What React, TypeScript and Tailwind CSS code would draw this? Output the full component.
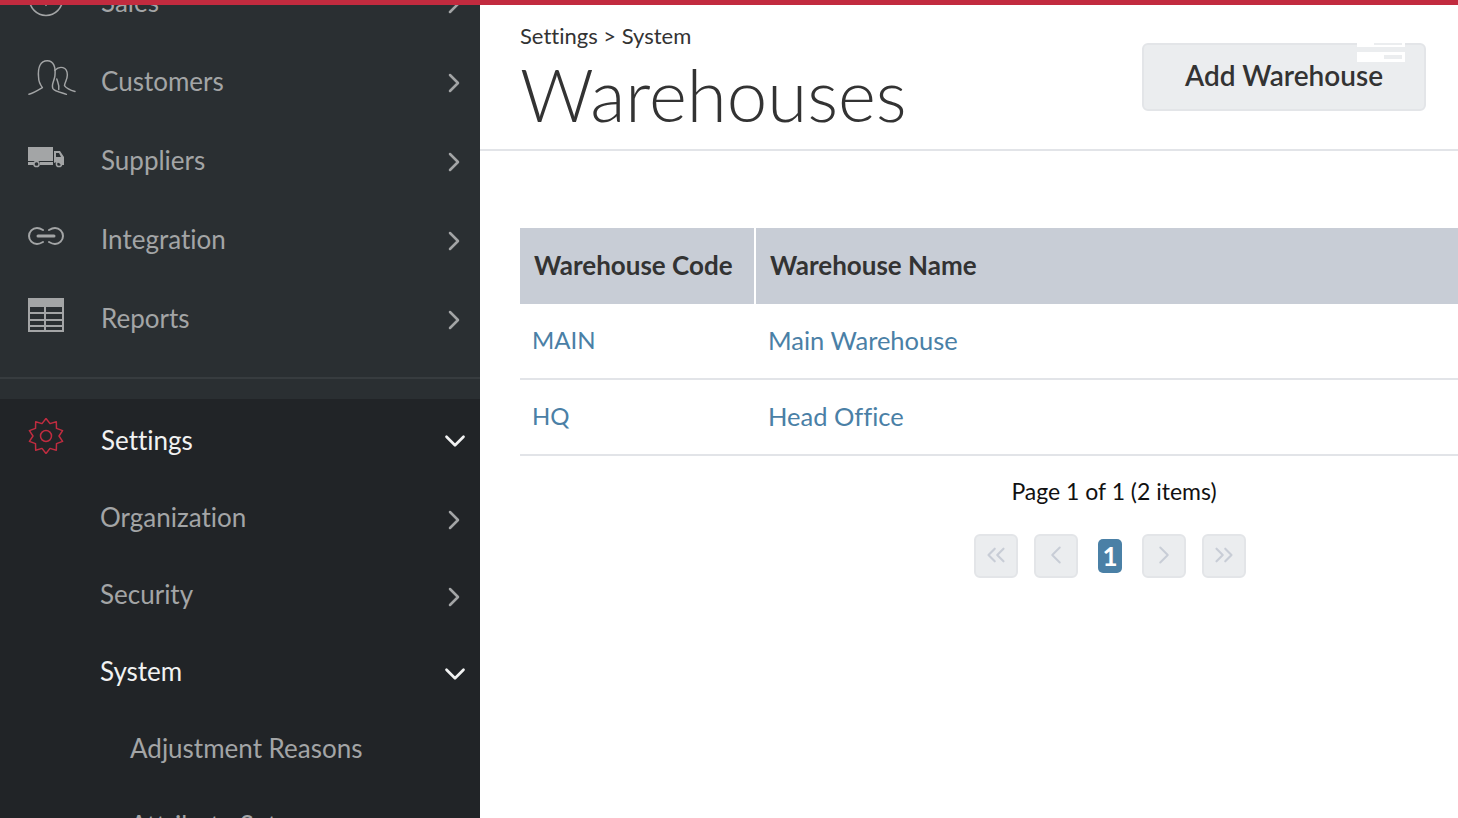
import React from "react";
import { ChevronRight, ChevronDown, ChevronLeft, ChevronsLeft, ChevronsRight } from "lucide-react";

const font = "font-['Lato','Liberation_Sans',sans-serif]";

const CustomersIcon = () => (
  <svg width="48" height="38" viewBox="0 0 50 38" fill="none" stroke="#a3a5a6" strokeWidth="1.5" strokeLinecap="round" strokeLinejoin="round">
    <path d="M1 36 C5 35 10 32 15 29 C12 25 11 23 11 18 C10 8 13 1 20 1 C27 1 29 8 28 17 C27 23 24 26 26 30 C28 33 34 34 40 36" />
    <path d="M28 11 C33 6 41 7 41 16 C41 21 38 24 38 27 C40 30 45 32 49 33" />
    <path d="M30 20 C31 24 33 27 32 31" />
  </svg>
);

const TruckIcon = () => (
  <svg width="36" height="21" viewBox="0 0 36 21">
    <path fill="#a3a5a6" d="M0 0 H25 V14 H0 Z M0 15 H6 V18 H0 Z M12 15 H25 V18 H12 Z" />
    <path fill="#a3a5a6" fillRule="evenodd" d="M26 4 H32 L36 10 V18 H33 A5 5 0 0 0 26 16 Z M28 6 V10 H33 L31 6 Z" />
    <circle cx="8.5" cy="17" r="2.6" fill="none" stroke="#a3a5a6" strokeWidth="1.5" />
    <circle cx="31" cy="17" r="2.6" fill="none" stroke="#a3a5a6" strokeWidth="1.5" />
  </svg>
);

const LinkIcon = () => (
  <svg width="36" height="18" viewBox="0 0 36 18" fill="none" stroke="#a3a5a6" strokeLinecap="round">
    <path strokeWidth="2" d="M15 3 C13 1.800 11 1 9 1 A8 8 0 0 0 9 17 C11 17 13 16.200 15 15" />
    <path strokeWidth="2" d="M21 3 C23 1.800 25 1 27 1 A8 8 0 0 1 27 17 C25 17 23 16.200 21 15" />
    <path strokeWidth="3" d="M10 9 H26" />
  </svg>
);

const ReportsIcon = () => (
  <svg width="36" height="34" viewBox="0 0 36 34">
    <path fill="#a3a5a6" fillRule="evenodd" d="M0 0 H36 V34 H0 Z M2 9 V14 H16 V9 Z M18 9 V14 H34 V9 Z M2 16 V21 H16 V16 Z M18 16 V21 H34 V16 Z M2 23 V27 H16 V23 Z M18 23 V27 H34 V23 Z M2 29 V32 H16 V29 Z M18 29 V32 H34 V29 Z" />
  </svg>
);

const GearIcon = () => {
  // alternating outer and inner points of a ten tooth wheel
  const pts: string[] = [];
  for (let i = 0; i < 20; i++) {
    const r = i % 2 === 0 ? 17.500 : 13;
    const a = (i * Math.PI) / 10 - Math.PI / 2;
    pts.push(`${(18 + r * Math.cos(a)).toFixed(1)},${(18 + r * Math.sin(a)).toFixed(1)}`);
  }
  return (
    <svg width="36" height="36" viewBox="0 0 36 36" fill="none" stroke="#c02c40" strokeWidth="1.5" strokeLinejoin="round">
      <polygon points={pts.join(" ")} />
      <circle cx="18" cy="18" r="5.500" />
    </svg>
  );
};

const SalesIcon = () => (
  <svg width="36" height="36" viewBox="0 0 36 36" fill="none" stroke="#a3a5a6" strokeWidth="1.6">
    <circle cx="18" cy="18" r="16.500" />
    <path d="M18 10 V24 M14 20 L18 24 L22 20" />
  </svg>
);

const MenuRow = ({ icon, label, open, active, sub, height = "h-[79px]", chevron = "mt-[3px]" }: any) => (
  <div className={`flex items-center ${height} shrink-0`}>
    <div className="w-[28px] shrink-0" />
    <div className={`${icon ? "w-[73px]" : "w-[72px]"} shrink-0 flex items-start`}>{icon}</div>
    {sub === 2 && <div className="w-[30px] shrink-0" />}
    <span className={`text-[26px] flex-1 ${active ? "text-[#f1f2f2]" : "text-[#a3a5a6]"}`}>{label}</span>
    {open ? (
      <ChevronDown size={34} className={`mr-[8px] text-[#f1f2f2] ${chevron}`} strokeWidth={1.9} />
    ) : sub === 2 ? null : (
      <ChevronRight size={32} className={`mr-[10px] text-[#a3a5a6] ${chevron}`} strokeWidth={1.9} />
    )}
  </div>
);

const PageBtn = ({ children }: { children: React.ReactNode }) => (
  <div className="w-[44px] h-[44px] pb-[2px] flex items-center justify-center rounded-[6px] bg-[#ebedef] border-2 border-[#e3e5e8] text-[#c8cdd6]">
    {children}
  </div>
);

const rows = [
  { code: "MAIN", name: "Main Warehouse" },
  { code: "HQ", name: "Head Office" },
];

export default function App() {
  return (
    <div className={`h-[818px] w-full overflow-hidden flex flex-col bg-white [font-variant-ligatures:none] ${font}`}>
      <div className="h-[5px] shrink-0 bg-[#c22b3f]" />
      <div className="flex flex-1 min-h-0">
        <aside className="w-[480px] shrink-0 bg-[#2a2f32] overflow-hidden flex flex-col">
          <div className="-mt-[42px]">
            <MenuRow icon={<div className="-mt-[7px]"><SalesIcon /></div>} label="Sales" />
            <MenuRow icon={<div className="-mt-[7px]"><CustomersIcon /></div>} label="Customers" />
            <MenuRow icon={<div className="-mt-[7px]"><TruckIcon /></div>} label="Suppliers" />
            <MenuRow icon={<div className="-mt-[8px]"><LinkIcon /></div>} label="Integration" />
            <MenuRow icon={<div className="-mt-[7px]"><ReportsIcon /></div>} label="Reports" />
          </div>
          <div className="h-[19px] shrink-0" />
          <div className="h-[2px] shrink-0 bg-[#373c3f]" />
          <div className="h-[20px] shrink-0" />
          <div className="bg-[#212427] flex-1">
            <MenuRow icon={<div className="-mt-[8px]"><GearIcon /></div>} label="Settings" active open height="h-[80px] pt-[2px]" chevron="mt-[2px]" />
            <MenuRow label="Organization" height="h-[77px]" chevron="mt-[5px]" />
            <MenuRow label="Security" height="h-[77px]" chevron="mt-[5px]" />
            <MenuRow label="System" active open height="h-[77px]" chevron="mt-[5px]" />
            <MenuRow label="Adjustment Reasons" sub={2} height="h-[77px]" />
            <MenuRow label="Attribute Sets" sub={2} height="h-[77px]" />
          </div>
        </aside>
        <main className="flex-1 min-w-0 overflow-hidden">
          <header className="h-[146px] border-b-2 border-[#e2e4e8] pl-[40px] pr-[32px] flex justify-between">
            <div>
              <div className="mt-[18px] text-[22px] leading-[26px] text-[#333]">Settings &gt; System</div>
              <h1 className="text-[72.6px] leading-[84px] mt-[3px] font-light text-[#333]">Warehouses</h1>
            </div>
            <button className="relative mt-[38px] w-[284px] h-[68px] rounded-[6px] bg-[#ebedef] border-2 border-[#e3e5e8] text-[28px] leading-[60px] pb-[4px] font-semibold text-[#333]">
              Add Warehouse
              <span className="absolute left-[213px] -top-[2px] w-[48px] h-[4px] bg-white">
                <span className="absolute right-[3px] top-0 w-[28px] h-[2px] bg-[#ebedef]" />
              </span>
              <span className="absolute left-[213px] top-[7px] w-[48px] h-[10px] bg-white">
                <span className="absolute right-[3px] top-[3px] w-[18px] h-[4px] bg-[#ebedef]" />
              </span>
            </button>
          </header>
          <section className="ml-[40px] w-[1180px] pt-[77px]">
            <div className="grid grid-cols-[234px_1fr] text-[26px]">
              <div className="h-[76px] flex items-center pl-[14px] pb-[2px] bg-[#c8cdd6] font-bold text-[#333]">Warehouse Code</div>
              <div className="h-[76px] flex items-center pl-[14px] pb-[2px] bg-[#c8cdd6] font-bold text-[#333] ml-[2px]">Warehouse Name</div>
              {rows.map((r) => (
                <React.Fragment key={r.code}>
                  <div className="h-[76px] flex items-center pl-[12px] pb-[2px] border-b-2 border-[#e2e4e8] text-[24px] text-[#4a80a6]">{r.code}</div>
                  <div className="h-[76px] flex items-center pl-[14px] pb-[2px] border-b-2 border-[#e2e4e8] text-[25.5px] text-[#4a80a6]">{r.name}</div>
                </React.Fragment>
              ))}
            </div>
            <div className="mt-[20px] pl-[8px] text-center text-[23px] leading-[30px] text-[#111]">Page 1 of 1 (2 items)</div>
            <div className="mt-[28px] flex items-center justify-center gap-[16px]">
              <PageBtn><ChevronsLeft size={30} strokeWidth={1.7} /></PageBtn>
              <PageBtn><ChevronLeft size={30} strokeWidth={1.6} /></PageBtn>
              <div className="mx-[4px] w-[24px] h-[34px] rounded-[5px] bg-[#4a80a6] text-white font-bold text-[26px] flex items-center justify-center">1</div>
              <PageBtn><ChevronRight size={30} strokeWidth={1.6} /></PageBtn>
              <PageBtn><ChevronsRight size={30} strokeWidth={1.7} /></PageBtn>
            </div>
          </section>
        </main>
      </div>
    </div>
  );
}
